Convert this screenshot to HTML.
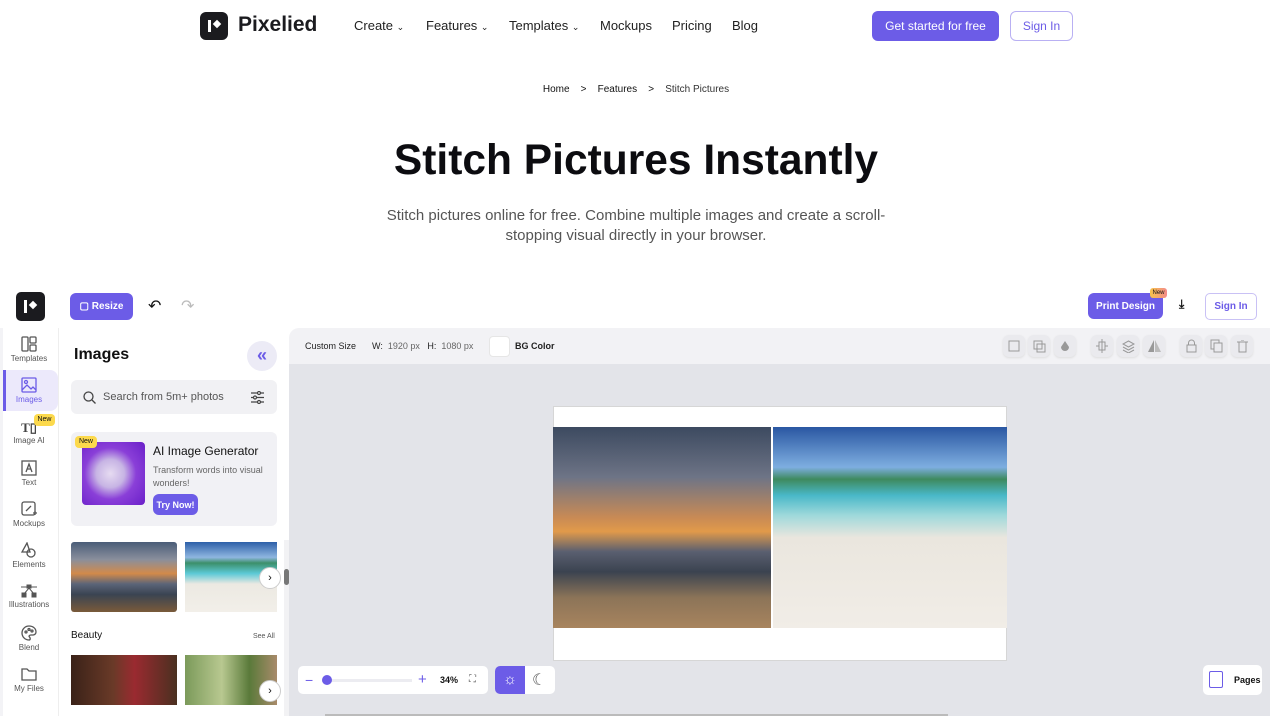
<!DOCTYPE html>
<html><head><meta charset="utf-8"><style>
*{box-sizing:border-box;margin:0;padding:0}
body{width:1280px;height:716px;overflow:hidden;background:#fff;font-family:"Liberation Sans",sans-serif;color:#111;position:relative}
.a{position:absolute}
.nav{font-size:13px;color:#222}
.nav small{font-size:9px}
.btnp{background:#6c5ce7;color:#fff;border-radius:6px;display:flex;align-items:center;justify-content:center;font-weight:bold}
.rail div{position:absolute;left:0;width:58px;text-align:center;font-size:8px;color:#555}
.rail svg{display:block;margin:0 auto 2px}
.tb{position:absolute;top:335px;width:22px;height:22px;border-radius:6px;background:#eaeaee;box-shadow:0 1px 2px #ddd;display:flex;align-items:center;justify-content:center}
</style></head><body>
<!-- header -->
<div class="a" style="left:200px;top:12px;width:28px;height:28px;background:#1b1b1f;border-radius:6px">
 <div class="a" style="left:8px;top:8px;width:3px;height:12px;background:#fff"></div>
 <div class="a" style="left:14px;top:9px;width:6px;height:6px;background:#fff;transform:rotate(45deg)"></div></div>
<div class="a" style="left:238px;top:13px;font-size:21px;font-weight:bold;color:#1b1b1f">Pixelied</div>
<div class="a nav" style="left:354px;top:18px">Create <small>⌄</small></div>
<div class="a nav" style="left:426px;top:18px">Features <small>⌄</small></div>
<div class="a nav" style="left:509px;top:18px">Templates <small>⌄</small></div>
<div class="a nav" style="left:600px;top:18px">Mockups</div>
<div class="a nav" style="left:672px;top:18px">Pricing</div>
<div class="a nav" style="left:732px;top:18px">Blog</div>
<div class="a btnp" style="left:872px;top:11px;width:127px;height:30px;font-weight:normal;font-size:12px">Get started for free</div>
<div class="a" style="left:1010px;top:11px;width:63px;height:30px;border:1px solid #b9b0f3;border-radius:6px;color:#6c5ce7;font-size:12px;display:flex;align-items:center;justify-content:center">Sign In</div>
<div class="a" style="left:0;width:1272px;top:84px;text-align:center;font-size:10px;color:#111"><span>Home</span>&nbsp;&nbsp;&nbsp;&nbsp;&gt;&nbsp;&nbsp;&nbsp;&nbsp;<span>Features</span>&nbsp;&nbsp;&nbsp;&nbsp;&gt;&nbsp;&nbsp;&nbsp;&nbsp;<span style="color:#333">Stitch Pictures</span></div>
<div class="a" style="left:0;width:1272px;top:137px;text-align:center;font-size:42.5px;font-weight:bold;color:#0c0c10">Stitch Pictures Instantly</div>
<div class="a" style="left:370px;width:532px;top:206px;text-align:center;font-size:15px;line-height:20px;color:#555">Stitch pictures online for free. Combine multiple images and create a scroll-stopping visual directly in your browser.</div>
<!-- editor top bar -->
<div class="a" style="left:16px;top:292px;width:29px;height:29px;background:#1b1b1f;border-radius:5px">
 <div class="a" style="left:8px;top:8px;width:3px;height:13px;background:#fff"></div>
 <div class="a" style="left:14px;top:10px;width:6px;height:6px;background:#fff;transform:rotate(45deg)"></div></div>
<div class="a btnp" style="left:70px;top:293px;width:63px;height:27px;font-size:10px">▢ Resize</div>
<div class="a" style="left:148px;top:296px;font-size:16px;color:#111">↶</div>
<div class="a" style="left:181px;top:296px;font-size:16px;color:#bbb">↷</div>
<div class="a btnp" style="left:1088px;top:293px;width:75px;height:26px;font-size:10px">Print Design</div>
<div class="a" style="left:1150px;top:288px;width:17px;height:10px;background:linear-gradient(90deg,#f7c34a,#f38a8a);border-radius:3px;font-size:6px;text-align:center;line-height:10px">New</div>
<div class="a" style="left:1179px;top:297px;font-size:12px;font-weight:bold">⤓</div>
<div class="a" style="left:1205px;top:293px;width:52px;height:27px;border:1px solid #c9c1f5;border-radius:5px;color:#6c5ce7;font-size:10px;font-weight:bold;display:flex;align-items:center;justify-content:center">Sign In</div>
<!-- rail -->
<div class="a" style="left:0;top:328px;width:3px;height:388px;background:#f3f3f6"></div>
<div class="a" style="left:3px;top:370px;width:55px;height:41px;background:#ece9fb;border-radius:0 8px 8px 0;border-left:3px solid #6c5ce7"></div>
<div class="rail">
<div style="top:336px"><svg width="16" height="16" viewBox="0 0 16 16" fill="none" stroke="#555" stroke-width="1.3"><rect x="1" y="1" width="6" height="14" rx="1"/><rect x="9" y="1" width="6" height="6" rx="1"/><rect x="9" y="9" width="6" height="6" rx="1"/></svg>Templates</div>
<div style="top:377px;color:#6c5ce7"><svg width="16" height="16" viewBox="0 0 16 16" fill="none" stroke="#6c5ce7" stroke-width="1.3"><rect x="1" y="1" width="14" height="14" rx="1"/><circle cx="5" cy="5" r="1.5"/><path d="M1 13l5-5 4 4 2-2 3 3"/></svg>Images</div>
<div style="top:420px"><div style="position:static;font:bold 13px 'Liberation Serif',serif;color:#444">T▯</div>Image AI</div>
<div style="top:460px"><svg width="16" height="16" viewBox="0 0 16 16" fill="none" stroke="#555" stroke-width="1.3"><rect x="1" y="1" width="14" height="14"/><path d="M5 12l3-8 3 8M6 9h4"/></svg>Text</div>
<div style="top:501px"><svg width="16" height="16" viewBox="0 0 16 16" fill="none" stroke="#555" stroke-width="1.3"><rect x="1" y="1" width="13" height="13" rx="2"/><path d="M5 10l5-5M12 12h4M14 10v4"/></svg>Mockups</div>
<div style="top:542px"><svg width="16" height="16" viewBox="0 0 16 16" fill="none" stroke="#555" stroke-width="1.3"><path d="M6 1L1 10h8z"/><circle cx="10" cy="11" r="4"/></svg>Elements</div>
<div style="top:584px"><svg width="18" height="14" viewBox="0 0 18 14" fill="#555" stroke="#555"><rect x="7" y="1" width="4" height="3"/><path d="M1 3h16M9 4L4 10M9 4l5 6" fill="none"/><rect x="2" y="9" width="4" height="4"/><rect x="12" y="9" width="4" height="4"/></svg>Illustrations</div>
<div style="top:625px"><svg width="16" height="16" viewBox="0 0 16 16" fill="none" stroke="#555" stroke-width="1.3"><path d="M8 1a7 7 0 100 14c1.5 0 1.5-2 .5-3s0-2 1.5-2h2a3 3 0 003-3C15 3.5 12 1 8 1z"/><circle cx="5" cy="7" r="1"/><circle cx="8" cy="4.5" r="1"/><circle cx="11" cy="6" r="1"/></svg>Blend</div>
<div style="top:666px"><svg width="16" height="16" viewBox="0 0 16 16" fill="none" stroke="#555" stroke-width="1.3"><path d="M1 3h5l2 2h7v9H1z"/></svg>My Files</div>
</div>
<div class="a" style="left:34px;top:414px;width:21px;height:12px;background:#fcd94c;border-radius:4px;font-size:7px;text-align:center;line-height:12px">New</div>
<!-- panel -->
<div class="a" style="left:58px;top:328px;width:1px;height:388px;background:#eee"></div>
<div class="a" style="left:74px;top:346px;font-size:16px;font-weight:bold">Images</div>
<div class="a" style="left:247px;top:341px;width:30px;height:30px;border-radius:50%;background:#ecebf6;color:#6c5ce7;font-size:18px;text-align:center;line-height:28px;font-weight:bold">«</div>
<div class="a" style="left:71px;top:380px;width:206px;height:34px;background:#f1f1f4;border-radius:6px"></div>
<svg class="a" style="left:83px;top:391px" width="13" height="13" viewBox="0 0 13 13" fill="none" stroke="#444" stroke-width="1.3"><circle cx="5.5" cy="5.5" r="4.5"/><path d="M9 9l3.5 3.5"/></svg>
<div class="a" style="left:103px;top:391px;font-size:11px;color:#555">Search from 5m+ photos</div>
<svg class="a" style="left:251px;top:391px" width="13" height="13" viewBox="0 0 13 13" stroke="#444" stroke-width="1.2"><path d="M0 2h13M0 6.5h13M0 11h13"/><circle cx="8" cy="2" r="1.5" fill="#fff"/><circle cx="4" cy="6.5" r="1.5" fill="#fff"/><circle cx="8" cy="11" r="1.5" fill="#fff"/></svg>
<div class="a" style="left:71px;top:432px;width:206px;height:94px;background:#f1f1f5;border-radius:6px"></div>
<div class="a" style="left:82px;top:442px;width:63px;height:63px;border-radius:4px;background:radial-gradient(circle at 45% 50%,#e6dbf1 0,#c7b4e4 30%,#8a3fd8 55%,#6a1fc9 100%)"></div>
<div class="a" style="left:75px;top:436px;width:22px;height:12px;background:#fcd94c;border-radius:4px;font-size:7px;text-align:center;line-height:12px">New</div>
<div class="a" style="left:153px;top:444px;font-size:12px">AI Image Generator</div>
<div class="a" style="left:153px;top:464px;font-size:9px;color:#666;line-height:13px;width:118px">Transform words into visual wonders!</div>
<div class="a btnp" style="left:153px;top:494px;width:45px;height:21px;font-size:9px">Try Now!</div>
<div class="a" style="left:71px;top:542px;width:106px;height:70px;border-radius:3px;background:linear-gradient(180deg,#4a5d78 0,#8a8f9c 25%,#d28a4a 45%,#5b6478 60%,#3a4452 75%,#7a5a3a 100%)"></div>
<div class="a" style="left:185px;top:542px;width:92px;height:70px;background:linear-gradient(180deg,#2d5fa8 0,#8fb6e0 22%,#3c8f6a 30%,#5cc9d6 45%,#ece9e2 60%,#f2efe9 100%)"></div>
<div class="a" style="left:259px;top:567px;width:22px;height:22px;border-radius:50%;background:#fff;border:1px solid #ccc;text-align:center;line-height:20px;font-size:11px">›</div>
<div class="a" style="left:284px;top:540px;width:5px;height:176px;background:#f2f2f4"></div>
<div class="a" style="left:284px;top:569px;width:5px;height:16px;background:#777;border-radius:3px"></div>
<div class="a" style="left:71px;top:630px;font-size:10px">Beauty</div>
<div class="a" style="left:253px;top:633px;font-size:7px;color:#555">See All</div>
<div class="a" style="left:71px;top:655px;width:106px;height:50px;background:linear-gradient(90deg,#3a2218,#6a3a28 40%,#9a2a30 60%,#4a3020)"></div>
<div class="a" style="left:185px;top:655px;width:92px;height:50px;background:linear-gradient(90deg,#7b9a5a,#b8c890 40%,#5a7a3a 70%,#a88a6a)"></div>
<div class="a" style="left:259px;top:680px;width:22px;height:22px;border-radius:50%;background:#fff;border:1px solid #ccc;text-align:center;line-height:20px;font-size:11px">›</div>
<!-- canvas -->
<div class="a" style="left:289px;top:328px;width:981px;height:36px;background:#f2f2f5;border-radius:10px 0 0 0"></div>
<div class="a" style="left:289px;top:364px;width:981px;height:352px;background:#e3e4e9"></div>
<div class="a" style="left:305px;top:341px;font-size:9px;color:#222">Custom Size</div>
<div class="a" style="left:372px;top:341px;font-size:9px;color:#222">W: <span style="color:#666">&nbsp;1920 px</span>&nbsp;&nbsp; H: <span style="color:#666">&nbsp;1080 px</span></div>
<div class="a" style="left:489px;top:336px;width:21px;height:21px;background:#fff;border-radius:4px;border:1px solid #e6e6e6"></div>
<div class="a" style="left:515px;top:341px;font-size:9px;font-weight:bold;color:#222">BG Color</div>
<div class="tb" style="left:1003px"><svg width="12" height="12" fill="none" stroke="#999"><rect x="1" y="1" width="10" height="10"/></svg></div>
<div class="tb" style="left:1028px"><svg width="13" height="13" fill="none" stroke="#999"><rect x="1" y="1" width="8" height="8"/><rect x="4" y="4" width="8" height="8"/></svg></div>
<div class="tb" style="left:1054px"><svg width="12" height="13"><path d="M6 1L2 7a4 4 0 008 0z" fill="#999"/></svg></div>
<div class="tb" style="left:1091px"><svg width="12" height="14" fill="none" stroke="#999"><path d="M6 0v14M0 7h3M9 7h3"/><rect x="3" y="3" width="6" height="8"/></svg></div>
<div class="tb" style="left:1117px"><svg width="13" height="13" fill="none" stroke="#999"><path d="M6.5 1L12 4 6.5 7 1 4zM1 7l5.5 3L12 7M1 10l5.5 3 5.5-3"/></svg></div>
<div class="tb" style="left:1143px"><svg width="13" height="12"><path d="M6 0L0 12h6z" fill="#999"/><path d="M7 0l6 12H7z" fill="#bbb"/></svg></div>
<div class="tb" style="left:1180px"><svg width="11" height="14" fill="none" stroke="#999"><path d="M2.5 6V4a3 3 0 016 0v2"/><rect x="1" y="6" width="9" height="7"/></svg></div>
<div class="tb" style="left:1205px"><svg width="13" height="14" fill="none" stroke="#999"><rect x="1" y="1" width="8" height="9"/><rect x="4" y="4" width="8" height="9" fill="#eaeaee"/></svg></div>
<div class="tb" style="left:1231px"><svg width="11" height="13" fill="none" stroke="#999"><path d="M0 2h11M2 2v10h7V2M4 0h3"/></svg></div>
<div class="a" style="left:553px;top:406px;width:454px;height:255px;background:#fff;border:1px solid #d6d6d6"></div>
<div class="a" style="left:553px;top:427px;width:218px;height:201px;background:linear-gradient(180deg,#3c4a60 0,#6e7486 25%,#c88a55 45%,#e19a4a 52%,#5a5f70 62%,#3b4350 72%,#8c7458 85%,#a8845e 100%)"></div>
<div class="a" style="left:773px;top:427px;width:234px;height:201px;background:linear-gradient(180deg,#2a57a2 0,#7eaee0 20%,#3e8a5e 26%,#49b8c8 34%,#9fd9db 44%,#eae6de 55%,#f1ede7 100%)"></div>
<div class="a" style="left:298px;top:666px;width:190px;height:28px;background:#fff;border-radius:5px"></div>
<div class="a" style="left:305px;top:672px;font-size:14px;color:#6c5ce7">−</div>
<div class="a" style="left:322px;top:679px;width:90px;height:3px;background:#ececf1"></div>
<div class="a" style="left:322px;top:675px;width:10px;height:10px;border-radius:50%;background:#6c5ce7"></div>
<div class="a" style="left:418px;top:671px;font-size:15px;color:#6c5ce7">+</div>
<div class="a" style="left:440px;top:675px;font-size:9px;font-weight:bold">34%</div>
<div class="a" style="left:469px;top:674px;font-size:10px;color:#555">⛶</div>
<div class="a" style="left:495px;top:666px;width:60px;height:28px;background:#fff;border-radius:5px;overflow:hidden"><div style="width:30px;height:28px;background:#6c5ce7;color:#fff;text-align:center;line-height:28px;font-size:15px">☼</div></div>
<div class="a" style="left:532px;top:670px;font-size:16px;color:#555">☾</div>
<div class="a" style="left:1203px;top:665px;width:59px;height:30px;background:#fff;border-radius:5px;font-size:9px;font-weight:bold;line-height:30px;padding-left:31px">Pages</div>
<div class="a" style="left:1209px;top:671px;width:14px;height:17px;border:1.5px solid #6c5ce7;border-radius:2px"></div>
<div class="a" style="left:325px;top:714px;width:623px;height:2px;background:#bbb"></div>
</body></html>
